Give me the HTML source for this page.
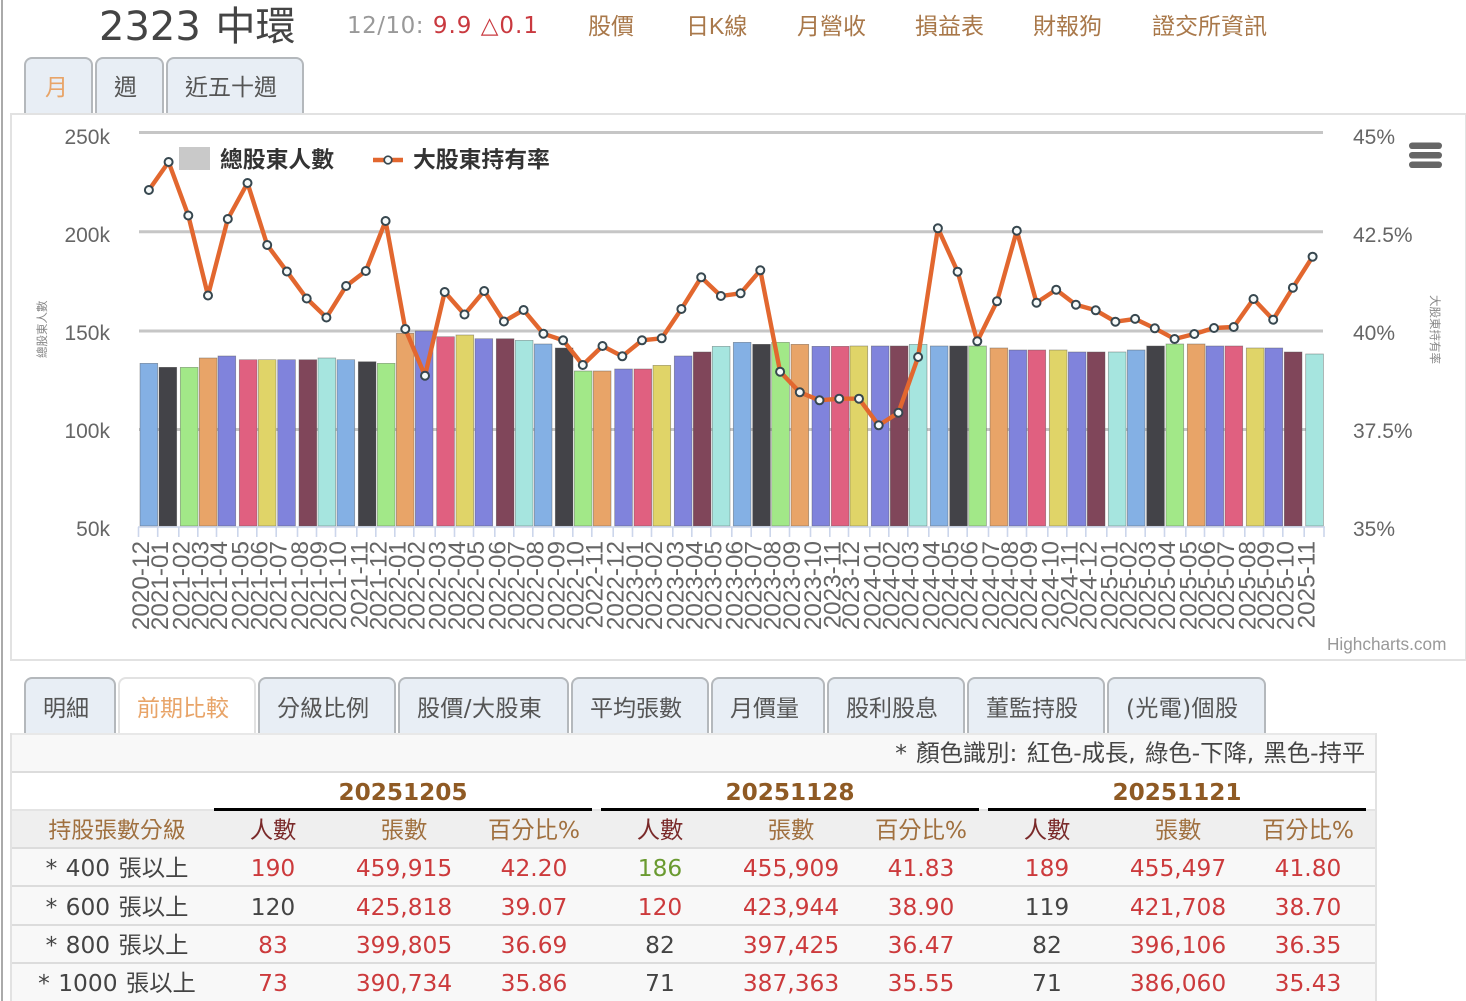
<!DOCTYPE html>
<html lang="zh-Hant"><head><meta charset="utf-8"><title>2323 中環</title>
<style>
html,body{margin:0;padding:0;background:#fff;width:1466px;height:1001px;overflow:hidden}
body{position:relative;font-family:"DejaVu Sans","Noto Sans CJK TC",sans-serif;color:#555}
.a{position:absolute;white-space:nowrap;line-height:1}
.rail{position:absolute;left:1px;top:0;width:2px;height:1001px;background:#aaa}
.nav{position:absolute;top:15px;font-size:23px;line-height:1;color:#a9784a;white-space:nowrap;font-family:"Liberation Sans","Noto Sans CJK TC",sans-serif}
.tab{position:absolute;box-sizing:border-box;background:#e8eef5;border:2px solid #b4b8bc;border-bottom:0;border-radius:8px 8px 0 0;text-align:left;padding-left:17px;font-size:23px;color:#555;white-space:nowrap;font-family:"DejaVu Sans","Noto Sans CJK TC",sans-serif}
.top{top:57px;height:56px;line-height:59px}
.bot{top:677px;height:56px;line-height:61px}
.on{background:#fff;border-color:#e2e2e2;color:#e8a468}
.box{position:absolute;left:10px;top:113px;width:1457px;height:548px;box-sizing:border-box;border:2px solid #e2e2e2;background:#fff}
svg{position:absolute;left:0;top:0}
table{position:absolute;left:10px;top:733px;width:1367px;table-layout:fixed;border-collapse:separate;border-spacing:0;border-left:2px solid #e2e2e2;border-right:2px solid #e2e2e2;box-sizing:border-box;font-size:23.3px;line-height:24px}
td,th{padding:0;box-sizing:border-box;text-align:center;white-space:nowrap;font-weight:400;border-bottom:2px solid #dcdcdc;background:#f8f8f8;color:#444;overflow:hidden}
.note td{height:40px;text-align:right;padding:2px 10px 0 0;border-top:2px solid #e8e8e8;color:#444;word-spacing:2px}
.date th{height:38px;background:#fff;border-bottom:2px solid #e4e4e4}
.date th.d{font-weight:700;color:#8f5a24;border-bottom:3px solid #000;font-size:23.2px;padding-top:5px}
.head th{height:38px;background:#efefef;color:#a0703f;padding-top:4px}
.head th:first-child{padding-left:8px;font-size:22.9px}
.head th.p{color:#7a2a2a}
.row td{height:38.4px;padding-top:4px}
.row td:first-child{padding-left:8px;word-spacing:1px}
.r{color:#cc3a3c!important}.g{color:#6a9a30!important}
.b0{fill:#84b0e4}.b1{fill:#434348}.b2{fill:#a2e888}.b3{fill:#e8a468}.b4{fill:#8083dc}.b5{fill:#e06080}.b6{fill:#e0d468}.b8{fill:#80465a}.b9{fill:#a6e5df}
</style></head><body>
<div class="rail"></div>

<div class="a" style="left:99px;top:7px;font-size:40px;color:#444;word-spacing:2px">2323 中環</div>
<div class="a" style="left:347px;top:15px;font-size:23px;letter-spacing:.5px;color:#999">12/10: <span style="color:#c9393f;margin-left:1px;letter-spacing:1px">9.9 △0.1</span></div>
<div class="nav" style="left:588px">股價</div>
<div class="nav" style="left:686px">日K線</div>
<div class="nav" style="left:797px">月營收</div>
<div class="nav" style="left:915px">損益表</div>
<div class="nav" style="left:1033px">財報狗</div>
<div class="nav" style="left:1152px">證交所資訊</div>

<div class="tab top" style="left:24px;width:69px;padding-left:19px;color:#e8a468">月</div>
<div class="tab top" style="left:95px;width:69px">週</div>
<div class="tab top" style="left:166px;width:138px">近五十週</div>

<div class="box"></div>
<svg width="1466" height="1001" viewBox="0 0 1466 1001" xmlns="http://www.w3.org/2000/svg">
<defs><marker id="m" markerUnits="userSpaceOnUse" markerWidth="12" markerHeight="12" refX="6" refY="6" viewBox="0 0 12 12"><circle cx="6" cy="6" r="4" fill="#f6fafa" stroke="#37474f" stroke-width="2"/></marker></defs>
<g stroke="#c6c6c6" stroke-width="3" fill="none">
<path d="M139 132.5H1323M139 231.7H1323M139 331H1323M139 429.5H1323"/>
</g>
<g stroke="#555" stroke-opacity=".55" stroke-width=".7">
<path class="b0" d="M140 363.3V526h17.7V363.3z"/><path class="b1" d="M159 367.3V526h17.7V367.3z"/><path class="b2" d="M180.3 367.3V526h17.7V367.3z"/><path class="b3" d="M199.3 358V526h17.7V358z"/><path class="b4" d="M218 356V526h17.7V356z"/><path class="b5" d="M239.3 359.7V526h17.7V359.7z"/><path class="b6" d="M258.3 359.7V526h17.7V359.7z"/><path class="b4" d="M277.7 359.7V526h17.7V359.7z"/><path class="b8" d="M299 359.7V526h17.7V359.7z"/><path class="b9" d="M318 358V526h17.7V358z"/>
<path class="b0" d="M337 359.7V526h17.7V359.7z"/><path class="b1" d="M358.3 361.7V526h17.7V361.7z"/><path class="b2" d="M377.3 363.3V526h17.7V363.3z"/><path class="b3" d="M396.3 333.3V526h17.7V333.3z"/><path class="b4" d="M415.3 331V526h17.7V331z"/><path class="b5" d="M436.7 336.7V526h17.7V336.7z"/><path class="b6" d="M456 335V526h17.7V335z"/><path class="b4" d="M475 338.7V526h17.7V338.7z"/><path class="b8" d="M496.3 338.7V526h17.7V338.7z"/><path class="b9" d="M515.3 340.3V526h17.7V340.3z"/>
<path class="b0" d="M534.3 344V526h17.7V344z"/><path class="b1" d="M555.3 348V526h17.7V348z"/><path class="b2" d="M574.3 371V526h17.7V371z"/><path class="b3" d="M593.3 371V526h17.7V371z"/><path class="b4" d="M614.7 369V526h17.7V369z"/><path class="b5" d="M634 369V526h17.7V369z"/><path class="b6" d="M653 365.3V526h17.7V365.3z"/><path class="b4" d="M674.3 356V526h17.7V356z"/><path class="b8" d="M693.3 352V526h17.7V352z"/><path class="b9" d="M712.3 346.3V526h17.7V346.3z"/>
<path class="b0" d="M733.3 342.3V526h17.7V342.3z"/><path class="b1" d="M752.7 344.3V526h17.7V344.3z"/><path class="b2" d="M771.7 342.3V526h17.7V342.3z"/><path class="b3" d="M791 344.3V526h17.7V344.3z"/><path class="b4" d="M812 346.3V526h17.7V346.3z"/><path class="b5" d="M831.3 346.3V526h17.7V346.3z"/><path class="b6" d="M850 346V526h17.7V346z"/><path class="b4" d="M871.3 346V526h17.7V346z"/><path class="b8" d="M890.3 346V526h17.7V346z"/><path class="b9" d="M909.3 344.3V526h17.7V344.3z"/>
<path class="b0" d="M930.3 346V526h17.7V346z"/><path class="b1" d="M949.7 346V526h17.7V346z"/><path class="b2" d="M968.7 346V526h17.7V346z"/><path class="b3" d="M990 348V526h17.7V348z"/><path class="b4" d="M1009 350V526h17.7V350z"/><path class="b5" d="M1028 350V526h17.7V350z"/><path class="b6" d="M1049.3 350V526h17.7V350z"/><path class="b4" d="M1068.3 352V526h17.7V352z"/><path class="b8" d="M1087.3 352V526h17.7V352z"/><path class="b9" d="M1108.3 352V526h17.7V352z"/>
<path class="b0" d="M1127.3 350V526h17.7V350z"/><path class="b1" d="M1146.7 346V526h17.7V346z"/><path class="b2" d="M1166 344V526h17.7V344z"/><path class="b3" d="M1187.3 344V526h17.7V344z"/><path class="b4" d="M1206 346V526h17.7V346z"/><path class="b5" d="M1225 346V526h17.7V346z"/><path class="b6" d="M1246.3 348V526h17.7V348z"/><path class="b4" d="M1265 348V526h17.7V348z"/><path class="b8" d="M1284.3 352V526h17.7V352z"/><path class="b9" d="M1305.7 354V526h17.7V354z"/>
</g>
<path fill="none" stroke="#ccd6eb" stroke-width="1.6" d="M138 527H1325M138.5 527v10M157.7 527v10M178.8 527v10M197.8 527v10M216.5 527v10M237.8 527v10M256.8 527v10M276.2 527v10M297.5 527v10M316.5 527v10M335.5 527v10M356.8 527v10M375.8 527v10M394.8 527v10M413.8 527v10M435.2 527v10M454.5 527v10M473.5 527v10M494.8 527v10M513.8 527v10M532.8 527v10M553.8 527v10M572.8 527v10M591.8 527v10M613.2 527v10M632.5 527v10M651.5 527v10M672.8 527v10M691.8 527v10M710.8 527v10M731.8 527v10M751.2 527v10M770.2 527v10M789.5 527v10M810.5 527v10M829.8 527v10M848.5 527v10M869.8 527v10M888.8 527v10M907.8 527v10M928.8 527v10M948.2 527v10M967.2 527v10M988.5 527v10M1007.5 527v10M1026.5 527v10M1047.8 527v10M1066.8 527v10M1085.8 527v10M1106.8 527v10M1125.8 527v10M1145.2 527v10M1164.5 527v10M1185.8 527v10M1204.5 527v10M1223.5 527v10M1244.8 527v10M1263.5 527v10M1282.8 527v10M1304.2 527v10M1324 527v10"/>

<g font-family="Liberation Sans,sans-serif" font-size="21" fill="#666">
<g text-anchor="end"><text x="110" y="144">250k</text><text x="110" y="242">200k</text><text x="110" y="340">150k</text><text x="110" y="438">100k</text><text x="110" y="536">50k</text></g>
<text x="1353" y="144">45%</text><text x="1353" y="242">42.5%</text><text x="1353" y="340">40%</text><text x="1353" y="438">37.5%</text><text x="1353" y="536">35%</text>
<text x="1327" y="650" font-size="17.2" fill="#999">Highcharts.com</text>
</g>

<g font-family="Liberation Sans,sans-serif" font-size="24.3" fill="#666" text-anchor="end">
<text transform="translate(149 541) rotate(-90)">2020-12</text><text transform="translate(168 541) rotate(-90)">2021-01</text><text transform="translate(189.3 541) rotate(-90)">2021-02</text><text transform="translate(208.3 541) rotate(-90)">2021-03</text><text transform="translate(227 541) rotate(-90)">2021-04</text><text transform="translate(248.3 541) rotate(-90)">2021-05</text><text transform="translate(267.3 541) rotate(-90)">2021-06</text><text transform="translate(286.7 541) rotate(-90)">2021-07</text><text transform="translate(308 541) rotate(-90)">2021-08</text><text transform="translate(327 541) rotate(-90)">2021-09</text>
<text transform="translate(346 541) rotate(-90)">2021-10</text><text transform="translate(367.3 541) rotate(-90)">2021-11</text><text transform="translate(386.3 541) rotate(-90)">2021-12</text><text transform="translate(405.3 541) rotate(-90)">2022-01</text><text transform="translate(424.3 541) rotate(-90)">2022-02</text><text transform="translate(445.7 541) rotate(-90)">2022-03</text><text transform="translate(465 541) rotate(-90)">2022-04</text><text transform="translate(484 541) rotate(-90)">2022-05</text><text transform="translate(505.3 541) rotate(-90)">2022-06</text><text transform="translate(524.3 541) rotate(-90)">2022-07</text>
<text transform="translate(543.3 541) rotate(-90)">2022-08</text><text transform="translate(564.3 541) rotate(-90)">2022-09</text><text transform="translate(583.3 541) rotate(-90)">2022-10</text><text transform="translate(602.3 541) rotate(-90)">2022-11</text><text transform="translate(623.7 541) rotate(-90)">2022-12</text><text transform="translate(643 541) rotate(-90)">2023-01</text><text transform="translate(662 541) rotate(-90)">2023-02</text><text transform="translate(683.3 541) rotate(-90)">2023-03</text><text transform="translate(702.3 541) rotate(-90)">2023-04</text><text transform="translate(721.3 541) rotate(-90)">2023-05</text>
<text transform="translate(742.3 541) rotate(-90)">2023-06</text><text transform="translate(761.7 541) rotate(-90)">2023-07</text><text transform="translate(780.7 541) rotate(-90)">2023-08</text><text transform="translate(800 541) rotate(-90)">2023-09</text><text transform="translate(821 541) rotate(-90)">2023-10</text><text transform="translate(840.3 541) rotate(-90)">2023-11</text><text transform="translate(859 541) rotate(-90)">2023-12</text><text transform="translate(880.3 541) rotate(-90)">2024-01</text><text transform="translate(899.3 541) rotate(-90)">2024-02</text><text transform="translate(918.3 541) rotate(-90)">2024-03</text>
<text transform="translate(939.3 541) rotate(-90)">2024-04</text><text transform="translate(958.7 541) rotate(-90)">2024-05</text><text transform="translate(977.7 541) rotate(-90)">2024-06</text><text transform="translate(999 541) rotate(-90)">2024-07</text><text transform="translate(1018 541) rotate(-90)">2024-08</text><text transform="translate(1037 541) rotate(-90)">2024-09</text><text transform="translate(1058.3 541) rotate(-90)">2024-10</text><text transform="translate(1077.3 541) rotate(-90)">2024-11</text><text transform="translate(1096.3 541) rotate(-90)">2024-12</text><text transform="translate(1117.3 541) rotate(-90)">2025-01</text>
<text transform="translate(1136.3 541) rotate(-90)">2025-02</text><text transform="translate(1155.7 541) rotate(-90)">2025-03</text><text transform="translate(1175 541) rotate(-90)">2025-04</text><text transform="translate(1196.3 541) rotate(-90)">2025-05</text><text transform="translate(1215 541) rotate(-90)">2025-06</text><text transform="translate(1234 541) rotate(-90)">2025-07</text><text transform="translate(1255.3 541) rotate(-90)">2025-08</text><text transform="translate(1274 541) rotate(-90)">2025-09</text><text transform="translate(1293.3 541) rotate(-90)">2025-10</text><text transform="translate(1314.7 541) rotate(-90)">2025-11</text>
</g>

<polyline fill="none" stroke="#e2672f" stroke-width="4.4" stroke-linejoin="round" marker-start="url(#m)" marker-mid="url(#m)" marker-end="url(#m)" points="148.9,190 168.6,162 188.3,215.5 208,295.5 227.8,219 247.5,183 267.2,245 286.9,271.5 306.7,298.5 326.4,317.5 346.1,286 365.8,271 385.6,221 405.3,329 425,375.7 444.7,292 464.5,314.5 484.2,291 503.9,321.5 523.6,310 543.4,333.7 563.1,340.3 582.8,365 602.5,346 622.3,356.3 642,340.3 661.7,338.3 681.4,309 701.2,277.3 720.9,296 740.6,293.3 760.3,270.3 780.1,371.7 799.8,392.3 819.5,400.3 839.2,398.7 859,398.7 878.7,425.3 898.4,412.7 918.1,357 937.9,228.3 957.6,271.7 977.3,341.3 997,301.3 1016.8,230.7 1036.5,302.7 1056.2,289.7 1075.9,304.7 1095.7,310.3 1115.4,321.7 1135.1,318.9 1154.8,328.3 1174.6,339 1194.3,334 1214,328 1233.7,327 1253.5,299 1273.2,319.7 1292.9,287.7 1312.6,256.7"/>

<rect x="179" y="147" width="31" height="23" fill="#c9c9c9"/>
<g font-family="Liberation Sans,Noto Sans CJK TC,sans-serif" font-size="22.8" font-weight="700" fill="#333">
<text x="220" y="167.5">總股東人數</text><text x="413" y="167.5">大股東持有率</text>
</g>
<path d="M373 160H403" stroke="#e2672f" stroke-width="4.4"/>
<circle cx="388" cy="160" r="3.8" fill="#f6fafa" stroke="#37474f" stroke-width="1.7"/>

<g fill="#666"><rect x="1409" y="142.5" width="33" height="6.5" rx="3.2"/><rect x="1409" y="152" width="33" height="6.5" rx="3.2"/><rect x="1409" y="161.5" width="33" height="6.5" rx="3.2"/></g>

<g font-family="Liberation Sans,Noto Sans CJK TC,sans-serif" font-size="11.5" fill="#888">
<text transform="translate(46 358) rotate(-90)">總股東人數</text>
<text transform="translate(1431 295) rotate(90)">大股東持有率</text>
</g>
</svg>

<div class="tab bot" style="left:24px;width:92px">明細</div>
<div class="tab bot on" style="left:118px;width:138px">前期比較</div>
<div class="tab bot" style="left:258px;width:138px">分級比例</div>
<div class="tab bot" style="left:398px;width:171px;letter-spacing:.4px">股價/大股東</div>
<div class="tab bot" style="left:571px;width:138px">平均張數</div>
<div class="tab bot" style="left:711px;width:114px">月價量</div>
<div class="tab bot" style="left:827px;width:138px">股利股息</div>
<div class="tab bot" style="left:967px;width:138px">董監持股</div>
<div class="tab bot" style="left:1107px;width:159px;letter-spacing:.4px">(光電)個股</div>

<table>
<colgroup><col style="width:202px"><col style="width:118px"><col style="width:144px"><col style="width:116px"><col style="width:9px"><col style="width:118px"><col style="width:144px"><col style="width:116px"><col style="width:9px"><col style="width:118px"><col style="width:144px"><col style="width:116px"><col style="width:9px"></colgroup>
<tr class="note"><td colspan="13">* 顏色識別: 紅色-成長, 綠色-下降, 黑色-持平</td></tr>
<tr class="date"><th></th><th colspan="3" class="d">20251205</th><th></th><th colspan="3" class="d">20251128</th><th></th><th colspan="3" class="d">20251121</th><th></th></tr>
<tr class="head"><th>持股張數分級</th><th class="p">人數</th><th>張數</th><th>百分比%</th><th></th><th class="p">人數</th><th>張數</th><th>百分比%</th><th></th><th class="p">人數</th><th>張數</th><th>百分比%</th><th></th></tr>
<tr class="row"><td>* 400 張以上</td><td class="r">190</td><td class="r">459,915</td><td class="r">42.20</td><td></td><td class="g">186</td><td class="r">455,909</td><td class="r">41.83</td><td></td><td class="r">189</td><td class="r">455,497</td><td class="r">41.80</td><td></td></tr>
<tr class="row"><td>* 600 張以上</td><td>120</td><td class="r">425,818</td><td class="r">39.07</td><td></td><td class="r">120</td><td class="r">423,944</td><td class="r">38.90</td><td></td><td>119</td><td class="r">421,708</td><td class="r">38.70</td><td></td></tr>
<tr class="row"><td>* 800 張以上</td><td class="r">83</td><td class="r">399,805</td><td class="r">36.69</td><td></td><td>82</td><td class="r">397,425</td><td class="r">36.47</td><td></td><td>82</td><td class="r">396,106</td><td class="r">36.35</td><td></td></tr>
<tr class="row"><td>* 1000 張以上</td><td class="r">73</td><td class="r">390,734</td><td class="r">35.86</td><td></td><td>71</td><td class="r">387,363</td><td class="r">35.55</td><td></td><td>71</td><td class="r">386,060</td><td class="r">35.43</td><td></td></tr>
</table>
</body></html>
